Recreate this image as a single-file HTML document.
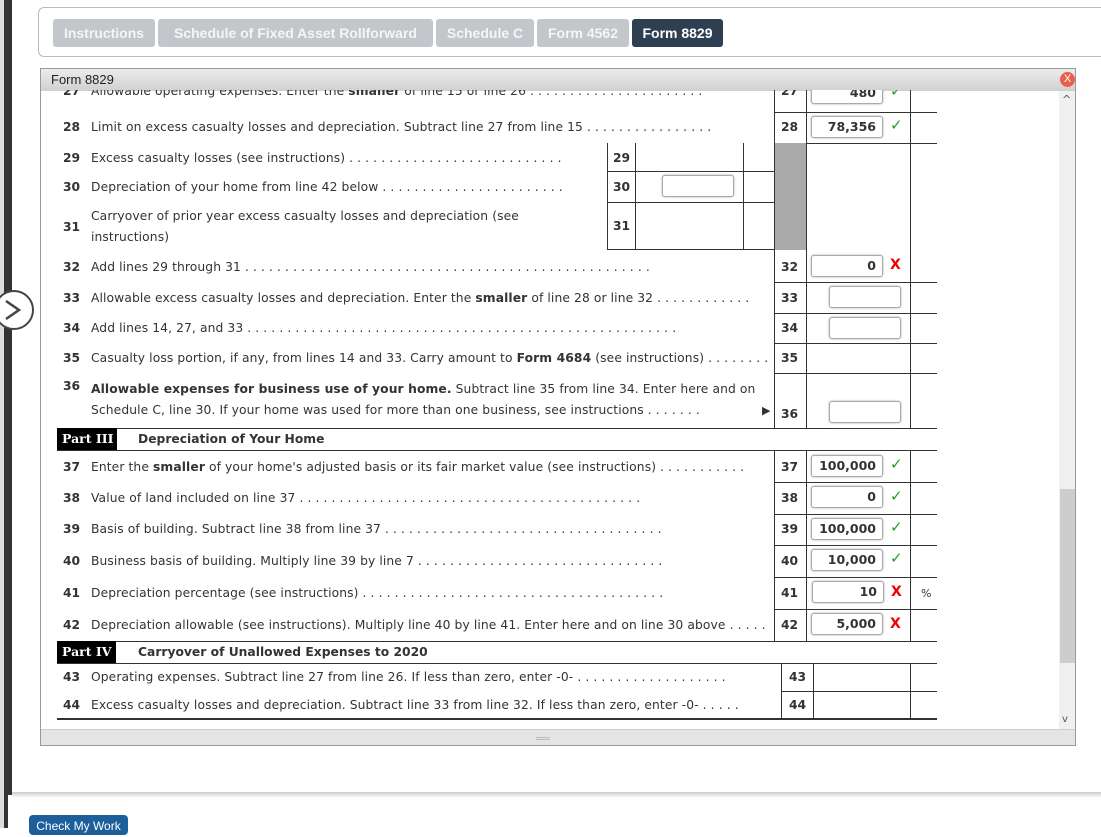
<!DOCTYPE html>
<html><head><style>
*{margin:0;padding:0;box-sizing:border-box}
body{width:1101px;height:828px;background:#fff;position:relative;overflow:hidden;font-family:"DejaVu Sans","Liberation Sans",sans-serif;color:#333}
.a{position:absolute}
.tabs{left:38px;top:7px;width:1080px;height:50px;border:1px solid #bbb;border-radius:6px}
.tab{position:absolute;top:19px;height:28px;background:#c3c7cb;color:#f4f5f6;font:bold 14px "Liberation Sans",sans-serif;line-height:28px;text-align:center;border-radius:3px}
.panel{left:40px;top:68px;width:1036px;height:678px;border:1px solid #999;background:#fff;overflow:hidden}
.hdr{left:0;top:0;width:1034px;height:22px;background:linear-gradient(#ececec,#d0d0d0);font:13px "Liberation Sans",sans-serif;color:#222;line-height:22px;padding-left:10px}
.t{position:absolute;font-size:12.3px;white-space:nowrap;color:#333;letter-spacing:0.1px}
.n{position:absolute;font-size:12.3px;font-weight:bold;color:#333}
.h{position:absolute;height:1px;background:#333}
.v{position:absolute;width:1px;background:#333}
.in{position:absolute;height:22px;width:72px;border:1px solid #aaa;border-radius:3px;box-shadow:0 0 2px #aaa;background:#fff;text-align:right;padding-right:6px;font-size:12.5px;font-weight:bold;line-height:20px;color:#333}
.ok{position:absolute;color:#2a9a2a;font-size:15px;font-weight:bold}
.x{position:absolute;color:#e00;font-size:14px;font-weight:bold}
b{font-weight:bold}
</style></head><body>
<div class="a" style="left:0;top:0;width:4px;height:828px;background:#ddd"></div>
<div class="a" style="left:4px;top:0;width:8px;height:795px;background:#333"></div>
<div class="a" style="left:4px;top:795px;width:4px;height:33px;background:#333"></div>
<div class="a tabs"></div>
<div class="tab" style="left:53px;width:102px">Instructions</div>
<div class="tab" style="left:158px;width:275px">Schedule of Fixed Asset Rollforward</div>
<div class="tab" style="left:436px;width:98px">Schedule C</div>
<div class="tab" style="left:537px;width:92px">Form 4562</div>
<div class="tab" style="left:632px;width:91px;background:#2f3f52;color:#fff">Form 8829</div>

<div class="a panel">
<div class="a hdr">Form 8829</div>
<div class="a" style="left:1019px;top:3px;width:15px;height:15px;border-radius:50%;background:#e8604c;color:#fff;font:11px sans-serif;text-align:center;line-height:15px">X</div>
<div class="a" style="left:1018px;top:22px;width:16px;height:655px;background:#f0f0f0"></div>
<div class="a" style="left:1019px;top:420px;width:15px;height:174px;background:#cdcdcd"></div>
<div class="a" style="left:1021px;top:24px;font-size:11px;color:#555">^</div>
<div class="a" style="left:1021px;top:645px;font-size:10px;color:#555">v</div>
<div class="a" style="left:0;top:660px;width:1034px;height:17px;background:#e4e4e4;border-top:1px solid #ccc"></div>
<div class="a" style="left:495px;top:668px;width:14px;height:3px;border-top:1px solid #bbb;border-bottom:1px solid #bbb"></div>
</div>

<div class="a" style="left:41px;top:90px;width:1017px;height:638px;overflow:hidden">
<div class="a" style="left:-41px;top:-90px;width:1101px;height:828px">
<span class="n" style="left:63px;top:84px">27</span><span class="t" style="left:91px;top:84px">Allowable operating expenses. Enter the <b>smaller</b> of line 15 or line 26 . . . . . . . . . . . . . . . . . . . . . .</span>
<span class="n" style="left:781px;top:84px">27</span><div class="in" style="left:811px;top:82px">480</div><span class="ok" style="left:890px;top:82px">✓</span>

<div class="h" style="left:774px;top:112px;width:163px"></div>
<span class="n" style="left:63px;top:120px">28</span><span class="t" style="left:91px;top:120px">Limit on excess casualty losses and depreciation. Subtract line 27 from line 15 . . . . . . . . . . . . . . . .</span>
<span class="n" style="left:781px;top:120px">28</span><div class="in" style="left:811px;top:116px">78,356</div><span class="ok" style="left:890px;top:116px">✓</span>
<div class="h" style="left:774px;top:143px;width:163px"></div>

<span class="n" style="left:63px;top:151px">29</span><span class="t" style="left:91px;top:151px">Excess casualty losses (see instructions) . . . . . . . . . . . . . . . . . . . . . . . . . . .</span>
<span class="n" style="left:613px;top:151px">29</span>
<div class="h" style="left:607px;top:171px;width:167px"></div>
<span class="n" style="left:63px;top:180px">30</span><span class="t" style="left:91px;top:180px">Depreciation of your home from line 42 below . . . . . . . . . . . . . . . . . . . . . . .</span>
<span class="n" style="left:613px;top:180px">30</span><div class="in" style="left:662px;top:175px;width:72px"></div>
<div class="h" style="left:607px;top:202px;width:167px"></div>
<span class="n" style="left:63px;top:220px">31</span><span class="t" style="left:91px;top:209px">Carryover of prior year excess casualty losses and depreciation (see</span><span class="t" style="left:91px;top:230px">instructions)</span>
<span class="n" style="left:613px;top:219px">31</span>
<div class="h" style="left:607px;top:249px;width:167px"></div>
<div class="v" style="left:607px;top:143px;height:107px"></div>
<div class="v" style="left:635px;top:143px;height:107px"></div>
<div class="v" style="left:743px;top:143px;height:107px"></div>
<div class="a" style="left:774px;top:143px;width:32px;height:107px;background:#aaa"></div>

<span class="n" style="left:63px;top:260px">32</span><span class="t" style="left:91px;top:260px">Add lines 29 through 31 . . . . . . . . . . . . . . . . . . . . . . . . . . . . . . . . . . . . . . . . . . . . . . . . . . .</span>
<span class="n" style="left:781px;top:260px">32</span><div class="in" style="left:811px;top:255px">0</div><span class="x" style="left:890px;top:257px">X</span>
<div class="h" style="left:774px;top:282px;width:163px"></div>
<span class="n" style="left:63px;top:291px">33</span><span class="t" style="left:91px;top:291px">Allowable excess casualty losses and depreciation. Enter the <b>smaller</b> of line 28 or line 32 . . . . . . . . . . . .</span>
<span class="n" style="left:781px;top:291px">33</span><div class="in" style="left:829px;top:286px;width:72px"></div>
<div class="h" style="left:774px;top:313px;width:163px"></div>
<span class="n" style="left:63px;top:321px">34</span><span class="t" style="left:91px;top:321px">Add lines 14, 27, and 33 . . . . . . . . . . . . . . . . . . . . . . . . . . . . . . . . . . . . . . . . . . . . . . . . . . . . . .</span>
<span class="n" style="left:781px;top:321px">34</span><div class="in" style="left:829px;top:317px;width:72px"></div>
<div class="h" style="left:774px;top:343px;width:163px"></div>
<span class="n" style="left:63px;top:351px">35</span><span class="t" style="left:91px;top:351px">Casualty loss portion, if any, from lines 14 and 33. Carry amount to <b>Form 4684</b> (see instructions) . . . . . . . .</span>
<span class="n" style="left:781px;top:351px">35</span>
<div class="h" style="left:774px;top:373px;width:163px"></div>
<span class="n" style="left:63px;top:379px">36</span><span class="t" style="left:91px;top:382px"><b>Allowable expenses for business use of your home.</b> Subtract line 35 from line 34. Enter here and on</span>
<span class="t" style="left:91px;top:403px">Schedule C, line 30. If your home was used for more than one business, see instructions . . . . . . .</span>
<span class="a" style="left:762px;top:404px;font-size:11px;color:#333">▶</span>
<span class="n" style="left:781px;top:407px">36</span><div class="in" style="left:829px;top:401px;width:72px"></div>
<div class="v" style="left:774px;top:112px;height:317px"></div>
<div class="v" style="left:806px;top:112px;height:317px"></div>
<div class="v" style="left:910px;top:112px;height:317px"></div>
<div class="v" style="left:806px;top:88px;height:24px"></div>
<div class="v" style="left:774px;top:88px;height:24px"></div>
<div class="v" style="left:910px;top:88px;height:24px"></div>

<div class="h" style="left:57px;top:428px;width:880px"></div>
<div class="a" style="left:57px;top:428px;width:60px;height:22px;background:#000;color:#fff;font:bold 12.5px 'DejaVu Serif',serif;line-height:22px;padding-left:5px">Part III</div>
<span class="n" style="left:138px;top:432px">Depreciation of Your Home</span>
<div class="h" style="left:57px;top:450px;width:880px"></div>

<span class="n" style="left:63px;top:460px">37</span><span class="t" style="left:91px;top:460px">Enter the <b>smaller</b> of your home's adjusted basis or its fair market value (see instructions) . . . . . . . . . . .</span>
<span class="n" style="left:781px;top:460px">37</span><div class="in" style="left:811px;top:455px">100,000</div><span class="ok" style="left:890px;top:455px">✓</span>
<div class="h" style="left:774px;top:482px;width:163px"></div>
<span class="n" style="left:63px;top:491px">38</span><span class="t" style="left:91px;top:491px">Value of land included on line 37 . . . . . . . . . . . . . . . . . . . . . . . . . . . . . . . . . . . . . . . . . . .</span>
<span class="n" style="left:781px;top:491px">38</span><div class="in" style="left:811px;top:486px">0</div><span class="ok" style="left:890px;top:487px">✓</span>
<div class="h" style="left:774px;top:514px;width:163px"></div>
<span class="n" style="left:63px;top:522px">39</span><span class="t" style="left:91px;top:522px">Basis of building. Subtract line 38 from line 37 . . . . . . . . . . . . . . . . . . . . . . . . . . . . . . . . . . .</span>
<span class="n" style="left:781px;top:522px">39</span><div class="in" style="left:811px;top:518px">100,000</div><span class="ok" style="left:890px;top:518px">✓</span>
<div class="h" style="left:774px;top:545px;width:163px"></div>
<span class="n" style="left:63px;top:554px">40</span><span class="t" style="left:91px;top:554px">Business basis of building. Multiply line 39 by line 7 . . . . . . . . . . . . . . . . . . . . . . . . . . . . . . .</span>
<span class="n" style="left:781px;top:554px">40</span><div class="in" style="left:811px;top:549px">10,000</div><span class="ok" style="left:890px;top:549px">✓</span>
<div class="h" style="left:774px;top:577px;width:163px"></div>
<span class="n" style="left:63px;top:586px">41</span><span class="t" style="left:91px;top:586px">Depreciation percentage (see instructions) . . . . . . . . . . . . . . . . . . . . . . . . . . . . . . . . . . . . . .</span>
<span class="n" style="left:781px;top:586px">41</span><div class="in" style="left:812px;top:581px">10</div><span class="x" style="left:891px;top:584px">X</span><span class="t" style="left:921px;top:587px;font-size:11px">%</span>
<div class="h" style="left:774px;top:609px;width:163px"></div>
<span class="n" style="left:63px;top:618px">42</span><span class="t" style="left:91px;top:618px">Depreciation allowable (see instructions). Multiply line 40 by line 41. Enter here and on line 30 above . . . . .</span>
<span class="n" style="left:781px;top:618px">42</span><div class="in" style="left:811px;top:613px">5,000</div><span class="x" style="left:890px;top:616px">X</span>
<div class="v" style="left:774px;top:450px;height:191px"></div>
<div class="v" style="left:806px;top:450px;height:191px"></div>
<div class="v" style="left:910px;top:450px;height:191px"></div>

<div class="h" style="left:57px;top:641px;width:880px"></div>
<div class="a" style="left:57px;top:641px;width:59px;height:22px;background:#000;color:#fff;font:bold 12.5px 'DejaVu Serif',serif;line-height:22px;padding-left:5px">Part IV</div>
<span class="n" style="left:138px;top:645px">Carryover of Unallowed Expenses to 2020</span>
<div class="h" style="left:57px;top:663px;width:880px"></div>
<span class="n" style="left:63px;top:670px">43</span><span class="t" style="left:91px;top:670px">Operating expenses. Subtract line 27 from line 26. If less than zero, enter -0- . . . . . . . . . . . . . . . . . . .</span>
<span class="n" style="left:789px;top:670px">43</span>
<div class="h" style="left:781px;top:691px;width:156px"></div>
<span class="n" style="left:63px;top:698px">44</span><span class="t" style="left:91px;top:698px">Excess casualty losses and depreciation. Subtract line 33 from line 32. If less than zero, enter -0- . . . . .</span>
<span class="n" style="left:789px;top:698px">44</span>
<div class="v" style="left:781px;top:663px;height:55px"></div>
<div class="v" style="left:813px;top:663px;height:55px"></div>
<div class="v" style="left:910px;top:663px;height:55px"></div>
<div class="a" style="left:57px;top:718px;width:880px;height:2px;background:#333"></div>
</div></div>

<div class="a" style="left:-6px;top:290px;width:40px;height:40px;border-radius:50%;border:2px solid #444;background:#fff"></div>
<svg class="a" style="left:2px;top:298px" width="22" height="24"><path d="M4 3 L17 12 L4 21" fill="none" stroke="#444" stroke-width="2.5"/></svg>

<div class="a" style="left:12px;top:792px;width:1089px;height:6px;background:linear-gradient(#ccc,#fff)"></div>
<div class="a" style="left:29px;top:815px;width:99px;height:20px;background:#1c5f9a;border-radius:4px;color:#fff;font:12px 'Liberation Sans',sans-serif;text-align:center;line-height:22px">Check My Work</div>
</body></html>
